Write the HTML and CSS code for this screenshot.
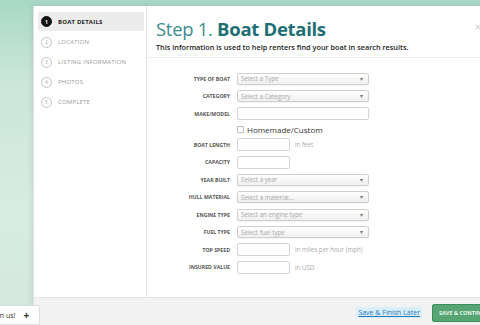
FILE: index.html
```html
<!DOCTYPE html>
<html lang="en">
<head>
    <meta charset="UTF-8">
    <meta name="viewport" content="width=device-width, initial-scale=1.0">
    <title>List your boat</title>
    <link rel="stylesheet" href="styles.css">
</head>
<body>
    <div class="modal">
        <aside class="steps">
            <div class="step active"><span class="num">1</span>Boat Details</div>
            <div class="step"><span class="num">2</span>Location</div>
            <div class="step"><span class="num">3</span>Listing Information</div>
            <div class="step"><span class="num">4</span>Photos</div>
            <div class="step"><span class="num">5</span>Complete</div>
        </aside>

        <main class="content">
            <span class="close">&times;</span>
            <header class="head">
                <h1>Step 1. <strong>Boat Details</strong></h1>
                <p>This information is used to help renters find your boat in search results.</p>
            </header>

            <form class="form">
                <div class="row">
                    <label>Type of boat</label>
                    <div class="select"><span>Select a Type</span><i>&#9662;</i></div>
                </div>
                <div class="row">
                    <label>Category</label>
                    <div class="select"><span>Select a Category</span><i>&#9662;</i></div>
                </div>
                <div class="row">
                    <label>Make/Model</label>
                    <div class="input wide"></div>
                </div>
                <div class="row check-row">
                    <label></label>
                    <div class="check"><span class="box"></span>Homemade/Custom</div>
                </div>
                <div class="row">
                    <label>Boat length</label>
                    <div class="input"></div>
                    <span class="unit">in feet</span>
                </div>
                <div class="row">
                    <label>Capacity</label>
                    <div class="input"></div>
                </div>
                <div class="row">
                    <label>Year built</label>
                    <div class="select"><span>Select a year</span><i>&#9662;</i></div>
                </div>
                <div class="row">
                    <label>Hull material</label>
                    <div class="select"><span>Select a material...</span><i>&#9662;</i></div>
                </div>
                <div class="row">
                    <label>Engine type</label>
                    <div class="select"><span>Select an engine type</span><i>&#9662;</i></div>
                </div>
                <div class="row">
                    <label>Fuel type</label>
                    <div class="select"><span>Select fuel type</span><i>&#9662;</i></div>
                </div>
                <div class="row">
                    <label>Top speed</label>
                    <div class="input"></div>
                    <span class="unit">in miles per hour (mph)</span>
                </div>
                <div class="row">
                    <label>Insured value</label>
                    <div class="input"></div>
                    <span class="unit">in USD</span>
                </div>
            </form>
        </main>

        <footer class="footer">
            <a href="#" class="later">Save &amp; Finish Later</a>
            <button class="continue">Save &amp; Continue</button>
        </footer>
    </div>

    <div class="join">Join us! <b>+</b></div>
</body>
</html>
```

FILE: styles.css
```css
body {
    margin: 0;
    height: 325px;
    overflow: hidden;
    font-family: "Open Sans", "DejaVu Sans", sans-serif;
    background: linear-gradient(180deg, #a8d8c6 0, #cbe6da 25%, #d7ece3 65%, #d3e7dd 100%);
}
.modal {
    position: absolute;
    left: 33px;
    top: 6px;
    right: -40px;
    bottom: -2px;
    background: #fff;
    border-left: 1px solid #e2e2e2;
    box-shadow: 0 0 6px rgba(0, 0, 0, 0.12);
    display: grid;
    grid-template-columns: 113px 1fr;
    grid-template-rows: 1fr 30px;
}
.steps {
    border-right: 1px solid #e6e6e6;
    padding: 6px 2px 0 4px;
}
.step {
    display: flex;
    align-items: center;
    height: 20px;
    padding-left: 3px;
    font-size: 6px;
    text-transform: uppercase;
    letter-spacing: 0.2px;
    color: #9a9a9a;
}
.step.active {
    background: #ececec;
    color: #222;
    font-weight: 700;
    height: 19px;
    margin-bottom: 1px;
}
.num {
    width: 9px;
    height: 9px;
    border: 1px solid #c4c4c4;
    border-radius: 50%;
    margin-right: 6px;
    display: flex;
    justify-content: center;
    align-items: center;
    font-size: 5px;
    color: #aaa;
    flex-shrink: 0;
}
.active .num {
    background: #111;
    border-color: #111;
    color: #fff;
}
.content {
    position: relative;
}
.close {
    position: absolute;
    top: 14px;
    left: 328px;
    font-size: 10px;
    color: #c8c8c8;
}
.head {
    padding: 12px 0 5px 9px;
    border-bottom: 1px solid #ebebeb;
}
.head h1 {
    margin: 0;
    font-size: 18.5px;
    line-height: 22px;
    font-weight: 400;
    color: #3a8d8f;
    letter-spacing: -0.3px;
}
.head h1 strong {
    font-weight: 700;
    color: #1e6f74;
}
.head p {
    margin: 2px 0 0;
    font-size: 7.3px;
    line-height: 10px;
    font-weight: 600;
    color: #222;
}
.form {
    padding: 12px 0 0 7px;
}
.row {
    display: flex;
    align-items: center;
    height: 17.5px;
}
.row label {
    width: 76px;
    margin-right: 7px;
    text-align: right;
    font-size: 5.2px;
    font-weight: 700;
    text-transform: uppercase;
    color: #555;
}
.select {
    box-sizing: border-box;
    width: 132px;
    height: 12px;
    border: 1px solid #cfcfcf;
    border-radius: 2px;
    background: linear-gradient(#fff, #efefef);
    box-shadow: 0 1px 1px rgba(0, 0, 0, 0.05);
    display: flex;
    align-items: center;
    justify-content: space-between;
    padding: 0 5px 0 3px;
    font-size: 6.2px;
    color: #a8a8a8;
}
.select i {
    font-style: normal;
    font-size: 6px;
    color: #777;
}
.input {
    box-sizing: border-box;
    width: 53px;
    height: 13px;
    border: 1px solid #d4d4d4;
    border-radius: 2px;
    background: #fff;
}
.input.wide {
    width: 132px;
}
.unit {
    margin-left: 5px;
    font-size: 6.2px;
    color: #aaa;
}
.check-row {
    height: 13.5px;
}
.check {
    display: flex;
    align-items: center;
    font-size: 8px;
    color: #333;
}
.box {
    width: 5px;
    height: 5px;
    border: 1px solid #bbb;
    border-radius: 1px;
    margin-right: 3px;
}
.footer {
    grid-column: 1 / 3;
    background: #f2f2f2;
    border-top: 1px solid #e4e4e4;
    display: flex;
    justify-content: flex-end;
    align-items: center;
    padding-right: 10px;
}
.later {
    font-size: 7px;
    color: #2a78b5;
    background: #d8eef9;
    padding: 1px 2px;
    margin-right: 10px;
}
.continue {
    width: 78px;
    height: 18px;
    border: 1px solid #3e8c5c;
    border-radius: 2px;
    background: #56a572;
    color: #e9f5ec;
    font-family: inherit;
    font-size: 5.5px;
    font-weight: 700;
    text-transform: uppercase;
    text-align: left;
    padding-left: 6px;
}
.join {
    position: absolute;
    left: -11px;
    bottom: 0;
    width: 47px;
    height: 18px;
    background: #fff;
    border: 1px solid #ddd;
    border-radius: 0 3px 0 0;
    display: flex;
    align-items: center;
    padding-left: 2px;
    font-size: 7px;
    color: #333;
}
.join b {
    margin-left: 8px;
    font-size: 10px;
}
```
